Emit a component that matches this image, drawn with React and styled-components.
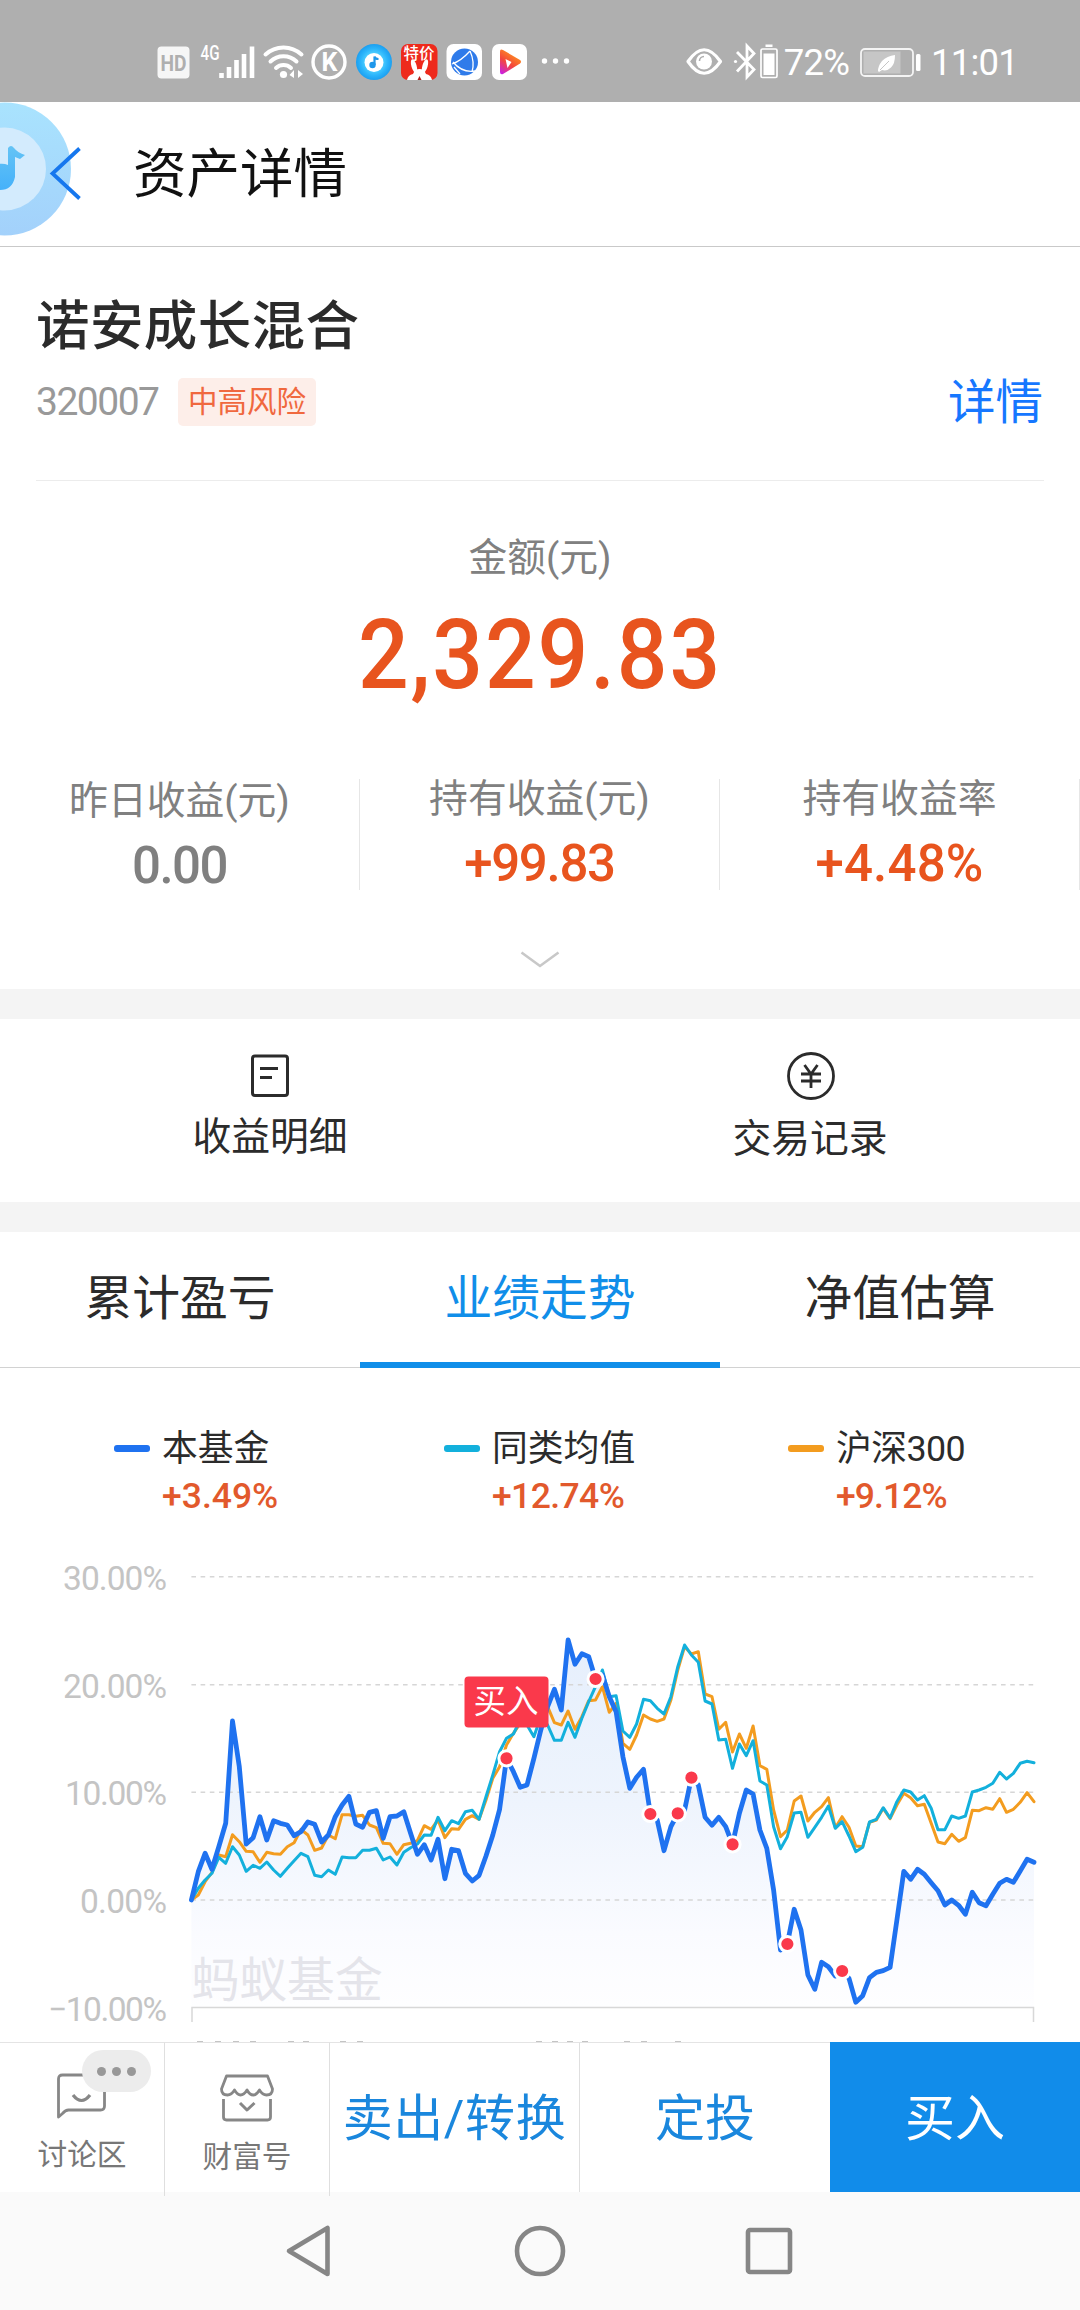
import styled, { createGlobalStyle } from 'styled-components';

const Palette = {
  TEXT: '#2b2b2b',
  MUTED: '#808080',
  UP: '#e8541e',
  LINK: '#1677ff',
  BRAND: '#108ee9',
  FUND: '#1f72f0',
  PEERS: '#13b0dc',
  INDEX: '#f39c1f',
  BUY: '#fa394b',
};

const GlobalStyle = createGlobalStyle`
  body {
    margin: 0;
    background: #fff;
    font-family: Roboto, "Noto Sans CJK SC", sans-serif;
    color: ${Palette.TEXT};
  }
`;

const Screen = styled.div`
  width: 1080px;
  height: 2310px;
  overflow: hidden;
  display: flex;
  flex-direction: column;
  background: #fff;

  svg {
    display: block;
    flex-shrink: 0;
  }
`;

/* status bar */

const StatusBar = styled.div`
  height: 102px;
  box-sizing: border-box;
  padding: 22px 62px 0 156px;
  display: flex;
  align-items: center;
  justify-content: space-between;
  background: #afafaf;
  color: #fff;
`;

const StatusGroup = styled.div`
  display: flex;
  align-items: center;
`;

const StatusText = styled.span`
  margin: 2px ${(p) => p.$after}px 0 ${(p) => p.$before}px;
  font-size: 36.5px;
  line-height: 40px;
  letter-spacing: -0.8px;
`;

/* header */

const Header = styled.div`
  height: 144px;
  display: flex;
  align-items: center;
  border-bottom: 1px solid #c9c9c9;
`;

const Title = styled.h1`
  margin: 2px 0 0 51px;
  font-size: 53.5px;
  line-height: 70px;
  font-weight: 400;
  color: #111;
`;

/* fund summary */

const Fund = styled.div`
  margin: 0 36px;
  padding: 45px 0 38px;
  border-bottom: 1px solid #ececec;
`;

const FundName = styled.h2`
  margin: 0;
  font-size: 53.5px;
  line-height: 70px;
  font-weight: 500;
  letter-spacing: 0.4px;
`;

const FundRow = styled.div`
  height: 80px;
  display: flex;
  align-items: center;
`;

const FundCode = styled.span`
  width: 142px;
  font-size: 39px;
  letter-spacing: -1.5px;
  color: #999;
`;

const RiskTag = styled.span`
  padding: 0 10px;
  border-radius: 5px;
  background: #fdeee9;
  color: #f0683e;
  font-size: 29.5px;
  line-height: 48px;
`;

const DetailLink = styled.a`
  margin: 2px 1px 0 auto;
  font-size: 47.5px;
  line-height: 60px;
  color: ${Palette.LINK};
`;

const Label = styled.div`
  font-size: 38.8px;
  line-height: 44px;
  color: ${Palette.MUTED};
`;

const Amount = styled.div`
  padding-top: 55px;
  text-align: center;
`;

const AmountValue = styled.div`
  margin-top: 25px;
  font-size: 96px;
  line-height: 100px;
  font-weight: 500;
  letter-spacing: 2px;
  transform: scaleX(0.93);
  color: ${Palette.UP};
`;

const Stats = styled.div`
  margin-top: 74px;
  display: grid;
  grid-template-columns: repeat(3, 1fr);
`;

const Stat = styled.div`
  height: 111px;
  box-sizing: border-box;
  border-right: 1px solid #e6e6e6;
  text-align: center;

  ${Label} {
    margin-top: ${(p) => (p.$lowered ? 0 : -2)}px;
  }
`;

const StatValue = styled.div`
  margin-top: 15px;
  font-size: 51px;
  line-height: 56px;
  font-weight: 500;
  letter-spacing: ${(p) => p.$spacing}px;
  color: ${(p) => (p.$up ? Palette.UP : Palette.MUTED)};
`;

const Expand = styled.div`
  height: 38px;
  padding-top: 61px;
  display: flex;
  justify-content: center;
`;

const Gap = styled.div`
  height: 30px;
  background: #f4f4f4;
`;

const Entries = styled.div`
  height: 183px;
  display: grid;
  grid-template-columns: 1fr 1fr;
`;

const Entry = styled.div`
  padding-top: 32px;
  display: flex;
  flex-direction: column;
  align-items: center;
`;

const EntryName = styled.div`
  margin-top: ${(p) => p.$gap}px;
  font-size: 38.8px;
  line-height: 44px;
`;

/* tabs and chart */

const Tabs = styled.div`
  height: 136px;
  display: grid;
  grid-template-columns: repeat(3, 1fr);
`;

const Tab = styled.div`
  box-sizing: border-box;
  height: 136px;
  padding-top: 1px;
  border-bottom: ${(p) => (p.$active ? `6px solid ${Palette.BRAND}` : '1px solid #d2d2d2')};
  text-align: center;
  font-size: 47.8px;
  line-height: 132px;
  color: ${(p) => (p.$active ? Palette.BRAND : Palette.TEXT)};
`;

const Legend = styled.div`
  padding: 56px 0 0 114px;
  display: grid;
  grid-template-columns: 330px 344px 1fr;
`;

const LegendItem = styled.div`
  display: grid;
  grid-template-columns: 48px 1fr;
  align-items: center;
`;

const Swatch = styled.span`
  width: 36px;
  height: 7px;
  margin-bottom: 2px;
  border-radius: 3px;
  background: ${(p) => p.$color};
`;

const LegendName = styled.span`
  font-size: 35.8px;
  line-height: 50px;
  letter-spacing: ${(p) => p.$spacing}px;
`;

const LegendRate = styled.span`
  grid-column: 2;
  font-size: 35.5px;
  line-height: 45px;
  font-weight: 500;
  letter-spacing: ${(p) => p.$spacing}px;
  color: #e2592c;
`;

const ChartBox = styled.div`
  height: 502px;
  margin-top: 21px;
`;

/* bottom bars */

const Actions = styled.div`
  height: 150px;
  display: grid;
  grid-template-columns: 165px 165px 250px 250px 250px;
`;

const Shortcut = styled.div`
  position: relative;
  box-sizing: border-box;
  padding-top: ${(p) => p.$top}px;
  border-top: 1px solid #e4e4e4;
  border-right: 1px solid #dfdfdf;
  display: flex;
  flex-direction: column;
  align-items: center;
  font-size: 29.7px;
  line-height: 40px;
  color: #777;

  svg {
    margin-bottom: 15px;
  }
`;

const Bubble = styled.span`
  position: absolute;
  left: 82px;
  top: 7px;
  width: 69px;
  height: 42px;
  border-radius: 21px;
  background: #ececec;
  display: flex;
  align-items: center;
  justify-content: center;
  gap: 6px;
`;

const BubbleDot = styled.i`
  width: 9px;
  height: 9px;
  border-radius: 50%;
  background: #989898;
`;

const Action = styled.div`
  box-sizing: border-box;
  border-top: 1px solid ${(p) => (p.$primary ? Palette.BRAND : '#e4e4e4')};
  border-right: ${(p) => (p.$divider ? '1px solid #dfdfdf' : '0')};
  background: ${(p) => (p.$primary ? '#118cea' : '#fff')};
  color: ${(p) => (p.$primary ? '#fff' : '#1a87dd')};
  text-align: center;
  white-space: nowrap;
  font-size: 50px;
  letter-spacing: ${(p) => (p.$divider ? 0.6 : 0)}px;
  line-height: 153px;
`;

const NavBar = styled.div`
  flex: 1;
  padding-left: 284px;
  display: flex;
  align-items: center;
  background: #fafafa;
`;

const NavIcon = styled.svg`
  margin-right: ${(p) => p.$gap}px;
  fill: none;
  stroke: #868686;
  stroke-width: 4.6;
  stroke-linejoin: round;
`;

/* Samples run down from the top of the plot, 3 units to a pixel; 1080 is 0.00% */
const FUND = [
  1080, 995, 940, 988, 920, 850, 543, 680, 912, 893, 830, 900, 842, 850, 855, 887,
  875, 846, 853, 906, 885, 830, 795, 769, 852, 862, 817, 812, 895, 830, 828, 815,
  880, 943, 914, 960, 898, 1016, 928, 932, 1000, 1023, 1006, 948, 885, 808, 655, 695,
  742, 735, 655, 570, 500, 448, 510, 300, 373, 341, 350, 417, 405, 470, 515, 650,
  745, 712, 688, 822, 840, 932, 860, 820, 810, 713, 735, 832, 856, 832, 860, 913,
  820, 750, 762, 870, 925, 1050, 1230, 1212, 1108, 1170, 1305, 1348, 1267, 1280, 1308, 1293,
  1315, 1387, 1367, 1313, 1297, 1292, 1282, 1140, 994, 1018, 988, 1003, 1028, 1052, 1095, 1080,
  1096, 1123, 1057, 1088, 1097, 1063, 1030, 1018, 1027, 993, 958, 967,
];

const PEERS = [
  1080, 1045, 1020, 1000, 952, 970, 920, 945, 994, 976, 985, 966, 990, 1009, 985, 962,
  940, 950, 1006, 1010, 990, 1003, 951, 953, 953, 931, 931, 925, 960, 951, 975, 937,
  923, 912, 885, 886, 832, 872, 842, 851, 815, 811, 838, 770, 705, 635, 595, 582,
  540, 555, 590, 530, 555, 601, 601, 547, 592, 535, 485, 440, 390, 470, 467, 573,
  592, 552, 478, 482, 505, 522, 470, 380, 315, 345, 367, 483, 492, 600, 598, 685,
  612, 647, 602, 723, 735, 860, 926, 890, 819, 817, 892, 862, 832, 798, 865, 845,
  888, 935, 922, 846, 838, 803, 834, 785, 750, 756, 780, 767, 805, 869, 869, 828,
  835, 828, 756, 750, 742, 730, 697, 717, 700, 670, 664, 668,
];

const INDEX = [
  1080, 1065, 1025, 998, 945, 950, 884, 905, 934, 935, 967, 937, 941, 943, 920, 908,
  868, 885, 931, 924, 885, 896, 824, 824, 829, 826, 855, 863, 910, 911, 943, 914,
  910, 902, 857, 868, 840, 893, 866, 868, 838, 827, 838, 780, 715, 680, 615, 580,
  550, 500, 540, 500, 500, 548, 555, 513, 568, 530, 482, 480, 440, 517, 490, 610,
  628, 585, 525, 537, 544, 537, 480, 390, 320, 342, 335, 462, 470, 568, 547, 636,
  582, 625, 558, 677, 688, 810, 890, 870, 783, 768, 843, 817, 800, 773, 863, 830,
  862, 918, 920, 847, 840, 805, 836, 795, 760, 773, 797, 793, 850, 906, 911, 883,
  904, 893, 811, 812, 803, 808, 776, 817, 808, 787, 758, 785,
];

const BUYS = [46, 59, 67, 71, 73, 79, 87, 95];
const X0 = 191.4;
const STEP = 6.85;

const GRID = [
  { y: 36.7, label: '30.00%', x: 63, width: 104 },
  { y: 144.7, label: '20.00%', x: 63, width: 104 },
  { y: 252.3, label: '10.00%', x: 65, width: 102 },
  { y: 360, label: '0.00%', x: 80, width: 87 },
];

// Tips of the date labels that show above the action bar
const DATE_TIPS = [197, 215, 233, 250, 288, 303, 340, 357, 536, 552, 567, 582, 624, 641, 675];

const px = (i) => X0 + i * STEP;
const toPoints = (series) => series.map((v, i) => `${px(i).toFixed(1)},${(v / 3).toFixed(1)}`).join(' ');

const Chart = () => (
  <svg width="1080" height="502" viewBox="0 0 1080 502" fontFamily='Roboto, "Noto Sans CJK SC", sans-serif'>
    <defs>
      <linearGradient id="area" gradientUnits="userSpaceOnUse" x1="0" y1="100" x2="0" y2="466">
        <stop offset="0" stopColor="#e6effc" />
        <stop offset="0.45" stopColor="#eef4fd" />
        <stop offset="0.8" stopColor="#fafbff" />
        <stop offset="1" stopColor="#fefeff" />
      </linearGradient>
    </defs>
    <polygon points={`${X0},467 ${toPoints(FUND)} ${px(FUND.length - 1)},467`} fill="url(#area)" />
    {GRID.map((g) => (
      <g key={g.label}>
        <line x1={X0} x2="1034" y1={g.y} y2={g.y} stroke="#d6d6d6" strokeWidth="1.4" strokeDasharray="4.6 4.6" />
        <text x={g.x} y={g.y + 13} textLength={g.width} fontSize="33.5" fill="#c4c4c4">{g.label}</text>
      </g>
    ))}
    <text x="48" y="481" textLength="119" fontSize="33.5" fill="#c4c4c4">−10.00%</text>
    <text x="191.5" y="457" fontSize="47.8" fill="#e4e4ea">蚂蚁基金</text>
    <path d="M192 482v-14.5h841.500V482" fill="none" stroke="#d8d8d8" strokeWidth="1.5" />
    <g fill="none" strokeLinejoin="round" strokeLinecap="round">
      <polyline points={toPoints(INDEX)} stroke={Palette.INDEX} strokeWidth="3" />
      <polyline points={toPoints(PEERS)} stroke={Palette.PEERS} strokeWidth="3" />
      <polyline points={toPoints(FUND)} stroke={Palette.FUND} strokeWidth="4.8" />
    </g>
    {BUYS.map((i) => (
      <circle key={i} cx={px(i)} cy={FUND[i] / 3} r="7.6" fill={Palette.BUY} stroke="#fff" strokeWidth="3" />
    ))}
    <rect x="464.5" y="136.5" width="84" height="51" rx="4" fill={Palette.BUY} />
    <text x="506" y="173" textAnchor="middle" fontSize="32.5" fill="#fff">买入</text>
    {DATE_TIPS.map((x) => (
      <rect key={x} x={x} y="501" width="6" height="1" fill="#c4c4c4" />
    ))}
  </svg>
);

const StatusLeftIcons = () => (
  <svg width="420" height="40" viewBox="156 42 420 40" fill="none" fontFamily="Roboto, sans-serif">
    <defs>
      <radialGradient id="disc">
        <stop offset="0.45" stopColor="#4fd0ff" />
        <stop offset="0.75" stopColor="#2bb4fb" />
        <stop offset="1" stopColor="#1c9ff0" />
      </radialGradient>
      <linearGradient id="play" x1="0" y1="1" x2="0.6" y2="0">
        <stop offset="0" stopColor="#c51cf5" />
        <stop offset="0.5" stopColor="#f4473c" />
        <stop offset="1" stopColor="#ff9b1a" />
      </linearGradient>
    </defs>
    <rect x="157.5" y="46.5" width="32" height="32" rx="4" fill="#f6f6f6" />
    <text x="160.5" y="70.5" textLength="26" lengthAdjust="spacingAndGlyphs" fontSize="21.5" fontWeight="700" fill="#afafaf">HD</text>
    <text x="200.5" y="60" textLength="19" lengthAdjust="spacingAndGlyphs" fontSize="20.5" fontWeight="500" fill="#fff">4G</text>
    <path d="M221.5 73v5M229 67v11M236.5 60v18M244 54v24M252 46.5v31.5" stroke="#fff" strokeWidth="4.6" />
    <g stroke="#fff" strokeWidth="4" strokeLinecap="round">
      <path d="M265.5 54.5a26.5 26.5 0 0 1 36 0" />
      <path d="M270.5 61.500a18.5 18.5 0 0 1 26 0" />
      <path d="M276 68a11 11 0 0 1 15 0" />
    </g>
    <circle cx="283.5" cy="74.5" r="3.6" fill="#fff" />
    <path d="M294 70v8l-4.5-3zM298 70v8l5-4z" fill="#fff" />
    <circle cx="329" cy="62" r="16" stroke="#fff" strokeWidth="3.4" />
    <text x="329.500" y="71" textAnchor="middle" fontSize="25" fontWeight="700" fill="#fff">K</text>
    <circle cx="374" cy="62" r="18" fill="url(#disc)" />
    <circle cx="374" cy="62.5" r="9.5" fill="#fff" />
    <circle cx="372.5" cy="65" r="3.2" fill="#1e97ea" />
    <path d="M374.5 65v-8.5q.5 2.5 4 2.5" stroke="#1e97ea" strokeWidth="2.2" />
    <rect x="401" y="44" width="36.5" height="36" rx="7" fill="#ee2a1c" />
    <text x="403.5" y="59" textLength="31" fontSize="15.5" fontWeight="500" fill="#fff" fontFamily='"Noto Sans CJK SC", sans-serif'>特价</text>
    <g fill="#fff">
      <ellipse cx="414" cy="66" rx="2.6" ry="7" transform="rotate(-16 414 66)" />
      <ellipse cx="425" cy="66" rx="2.6" ry="7" transform="rotate(16 425 66)" />
      <path d="M407 80q1-5 6-6 2-5 6.500-5t6.500 5q5 1 6 6z" />
    </g>
    <path d="M417.5 80l2-4 2 4z" fill="#b3201a" />
    <rect x="446.5" y="44" width="35.5" height="36" rx="7" fill="#fff" />
    <circle cx="464.5" cy="62" r="13.5" fill="#2f7bea" />
    <path d="M452 64q9-3 18-13M453 62q9 11 22 9M470 51q5 11 2 21M454 67l6 7" stroke="#fff" strokeWidth="1.3" />
    <rect x="492" y="44" width="35" height="36" rx="7" fill="#fff" />
    <path d="M500 51.500q0-3 3-1.500l17 10q2 1.500 0 3.500l-17 10.500q-3 1-3-2z" fill="url(#play)" />
    <path d="M505.5 59l6 3-4 6z" fill="#fff" />
    <g fill="#fff">
      <circle cx="544.5" cy="61" r="2.7" />
      <circle cx="555.5" cy="61" r="2.7" />
      <circle cx="566.5" cy="61" r="2.7" />
    </g>
  </svg>
);

const StatusRightIcons = () => (
  <svg width="94" height="40" viewBox="686 42 94 40" fill="none" stroke="#fff">
    <path d="M688 61.500q16-23.500 32.500 0-16.500 23.500-32.500 0z" strokeWidth="3.2" strokeLinejoin="round" />
    <circle cx="704" cy="61.5" r="8" fill="#fff" stroke="none" />
    <path d="M699.500 61a4.500 4.500 0 0 1 4.500-4.500" stroke="#afafaf" strokeWidth="1.6" />
    <path d="M737 52l17 17.500-7 7.500V46l7 7.500L737 71.500" strokeWidth="2.8" />
    <circle cx="735.5" cy="61.5" r="1.6" fill="#fff" stroke="none" />
    <rect x="761" y="49" width="16" height="28.5" rx="1.5" strokeWidth="1.7" />
    <path d="M763.500 53.500h11v21.500h-11zM765.500 44.500h7v2.500h-7z" fill="#fff" stroke="none" />
  </svg>
);

const BatteryIcon = () => (
  <svg width="62" height="40" viewBox="860 42 62 40" fill="none">
    <rect x="861" y="49" width="52" height="27" rx="4" stroke="#f4f4f4" strokeWidth="1.8" />
    <rect x="863.5" y="51.5" width="37" height="22" fill="#c6c6c6" />
    <path d="M878 71q0-5 4-10 5-5 13-6 0 9-4 12.500-4 4-9 2.500l-3 2z" fill="#fff" />
    <path d="M880 70l9-9" stroke="#c6c6c6" strokeWidth="1" />
    <rect x="916" y="54" width="4.5" height="17" rx="1.5" fill="#fff" />
  </svg>
);

// Floating music ball half off the screen, with the back arrow over it
const BackIcon = () => (
  <svg width="82" height="144" viewBox="0 102 82 144" fill="none">
    <defs>
      <linearGradient id="ball" x1="0" y1="0" x2="0" y2="1">
        <stop offset="0" stopColor="#a9e3fe" />
        <stop offset="1" stopColor="#a3d1fb" />
      </linearGradient>
      <linearGradient id="note" x1="0" y1="0" x2="0" y2="1">
        <stop offset="0" stopColor="#64c3f5" />
        <stop offset="1" stopColor="#45b1fa" />
      </linearGradient>
    </defs>
    <circle cx="4.5" cy="169" r="66.500" fill="url(#ball)" />
    <circle cx="4.500" cy="169" r="41.500" fill="#d3ebfd" />
    <path d="M8 148q3-4 6 0 4 5 11 7l-5 4-5-2v20q-3 14-17 13v-26q6-1 10 1z" fill="url(#note)" />
    <path d="M79.500 148.500L52.500 173.500 79.500 198.500" stroke="#1677ee" strokeWidth="3.8" />
  </svg>
);

const BillIcon = () => (
  <svg width="48" height="50" viewBox="0 0 48 50" fill="none" stroke="#2b2b2b" strokeWidth="3">
    <rect x="6.5" y="5" width="35" height="39.5" rx="2.5" />
    <path d="M14 17.500h18M14 26.500h12" />
  </svg>
);

const YuanIcon = () => (
  <svg width="50" height="50" viewBox="0 0 50 50" fill="none" stroke="#2b2b2b" strokeWidth="2.8">
    <circle cx="26" cy="25" r="22.5" />
    <path d="M19.500 14l6.500 9 6.500-9M26 23v14M16 23h20M16 30h20" />
  </svg>
);

const ChatIcon = () => (
  <svg width="54" height="48" viewBox="0 0 54 48" fill="none" stroke="#878787" strokeWidth="2.8">
    <path d="M3.500 45V7q0-4 4-4h38q4 0 4 4v27q0 4-4 4h-32q-3 0-6 3.500z" strokeLinejoin="round" />
    <path d="M18 23q8.500 11 17 0" strokeWidth="3.2" />
  </svg>
);

const ShopIcon = () => (
  <svg width="56" height="48" viewBox="0 0 56 48" fill="none" stroke="#878787" strokeWidth="2.8" strokeLinejoin="round">
    <path d="M7.500 2h41l5 13q0 6-6 6-4 0-7-5-3 5-6 5-4 0-6.500-5-3 5-6.500 5-3 0-6-5-3 5-7 5-6 0-6-6z" />
    <path d="M4.500 25v18q0 3 3 3h41q3 0 3-3V25" />
    <path d="M21 29l7 7 7.500-7" strokeWidth="3" />
  </svg>
);

const stats = [
  { label: '昨日收益(元)', value: '0.00', spacing: -1.5 },
  { label: '持有收益(元)', value: '+99.83', spacing: -1.3, up: true },
  { label: '持有收益率', value: '+4.48%', spacing: 0.2, up: true },
];

const legend = [
  { name: '本基金', rate: '+3.49%', color: Palette.FUND, nameSpacing: 0, spacing: 0 },
  { name: '同类均值', rate: '+12.74%', color: Palette.PEERS, nameSpacing: 0, spacing: -0.6 },
  { name: '沪深300', rate: '+9.12%', color: Palette.INDEX, nameSpacing: -0.6, spacing: -0.9 },
];

const tabs = ['累计盈亏', '业绩走势', '净值估算'];

const App = () => (
  <Screen>
    <GlobalStyle />
    <StatusBar>
      <StatusGroup><StatusLeftIcons /></StatusGroup>
      <StatusGroup>
        <StatusRightIcons />
        <StatusText $before={4} $after={11}>72%</StatusText>
        <BatteryIcon />
        <StatusText $before={9} $after={0}>11:01</StatusText>
      </StatusGroup>
    </StatusBar>
    <Header>
      <BackIcon />
      <Title>资产详情</Title>
    </Header>
    <Fund>
      <FundName>诺安成长混合</FundName>
      <FundRow>
        <FundCode>320007</FundCode>
        <RiskTag>中高风险</RiskTag>
        <DetailLink>详情</DetailLink>
      </FundRow>
    </Fund>
    <Amount>
      <Label>金额(元)</Label>
      <AmountValue>2,329.83</AmountValue>
    </Amount>
    <Stats>
      {stats.map((s) => (
        <Stat key={s.label} $lowered={!s.up}>
          <Label>{s.label}</Label>
          <StatValue $up={s.up} $spacing={s.spacing}>{s.value}</StatValue>
        </Stat>
      ))}
    </Stats>
    <Expand>
      <svg width="40" height="18" viewBox="0 0 40 18" fill="none" stroke="#c8c8c8" strokeWidth="2.6">
        <path d="M1.500 1.500L20 15 38.500 1.500" />
      </svg>
    </Expand>
    <Gap />
    <Entries>
      <Entry>
        <BillIcon />
        <EntryName $gap={14}>收益明细</EntryName>
      </Entry>
      <Entry>
        <YuanIcon />
        <EntryName $gap={16}>交易记录</EntryName>
      </Entry>
    </Entries>
    <Gap />
    <Tabs>
      {tabs.map((name, i) => <Tab key={name} $active={i === 1}>{name}</Tab>)}
    </Tabs>
    <Legend>
      {legend.map((item) => (
        <LegendItem key={item.name}>
          <Swatch $color={item.color} />
          <LegendName $spacing={item.nameSpacing}>{item.name}</LegendName>
          <LegendRate $spacing={item.spacing}>{item.rate}</LegendRate>
        </LegendItem>
      ))}
    </Legend>
    <ChartBox><Chart /></ChartBox>
    <Actions>
      <Shortcut $top={29}>
        <ChatIcon />
        讨论区
        <Bubble>
          <BubbleDot />
          <BubbleDot />
          <BubbleDot />
        </Bubble>
      </Shortcut>
      <Shortcut $top={31}>
        <ShopIcon />
        财富号
      </Shortcut>
      <Action $divider>卖出/转换</Action>
      <Action>定投</Action>
      <Action $primary>买入</Action>
    </Actions>
    <NavBar>
      <NavIcon $gap={182} width="48" height="56" viewBox="0 0 48 56">
        <path d="M43.500 5v46L5 28z" />
      </NavIcon>
      <NavIcon $gap={179} width="52" height="52" viewBox="0 0 52 52">
        <circle cx="26" cy="26" r="23" />
      </NavIcon>
      <NavIcon $gap={0} width="48" height="48" viewBox="0 0 48 48">
        <rect x="3" y="3" width="42" height="42" rx="2" />
      </NavIcon>
    </NavBar>
  </Screen>
);

export default App;
